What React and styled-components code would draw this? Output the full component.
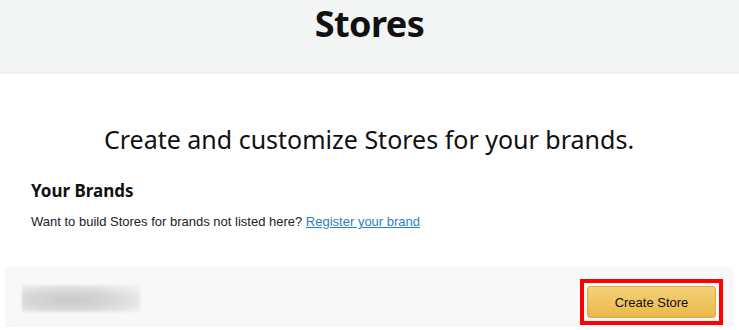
import React from 'react';
import styled, { createGlobalStyle } from 'styled-components';

const GlobalStyle = createGlobalStyle`
  body {
    margin: 0;
    background: #ffffff;
    font-family: "Noto Sans", Arial, sans-serif;
    color: #111111;
  }
`;

function App() {
  return (
    <>
      <GlobalStyle />
      <Header>
        <Title>Stores</Title>
      </Header>
      <Main>
        <Lead>Create and customize Stores for your brands.</Lead>
        <Section>
          <SectionTitle>Your Brands</SectionTitle>
          <Hint>
            Want to build Stores for brands not listed here?{' '}
            <Link href="#">Register your brand</Link>
          </Hint>
        </Section>
        <BrandCard>
          <BlurredName />
          <Highlight>
            <CreateButton>Create Store</CreateButton>
          </Highlight>
        </BrandCard>
      </Main>
    </>
  );
}

export default App;

const Header = styled.header`
  height: 72px;
  background-color: #f3f4f4;
  border-bottom: 1px solid #ebebeb;
  box-shadow: 0 1px 2px rgba(0, 0, 0, 0.04);
  display: flex;
  justify-content: center;
  align-items: flex-start;
`;

const Title = styled.h1`
  margin: 0;
  padding-top: 1px;
  font-size: 36px;
  line-height: 46px;
  font-weight: 700;
  letter-spacing: -0.6px;
`;

const Main = styled.main`
  padding: 46px 6px 0 5px;
`;

const Lead = styled.h2`
  margin: 0;
  text-align: center;
  font-size: 25px;
  line-height: 40px;
  font-weight: 400;
`;

const Section = styled.section`
  padding: 20px 26px 0;
`;

const SectionTitle = styled.h3`
  margin: 0;
  font-size: 17px;
  line-height: 24px;
  font-weight: 700;
`;

const Hint = styled.p`
  margin: 10px 0 0;
  font-family: "Liberation Sans", Arial, sans-serif;
  font-size: 13px;
  line-height: 18px;
  color: #222222;
`;

const Link = styled.a`
  color: #2a7fc9;
  text-decoration: underline;
`;

const BrandCard = styled.div`
  margin-top: 35px;
  height: 61px;
  background-color: #f8f8f8;
  border-radius: 6px;
  box-shadow: 0 1px 1px rgba(0, 0, 0, 0.12);
  display: flex;
  align-items: center;
  justify-content: space-between;
  padding: 0 10px 0 17px;
`;

const BlurredName = styled.div`
  width: 118px;
  height: 27px;
  margin-top: 4px;
  background: radial-gradient(ellipse at 40% 55%, #c9c9c9 0%, #d8d8d8 45%, #ececec 80%, #f4f4f4 100%);
  filter: blur(1px);
`;

const Highlight = styled.div`
  border: 4px solid #ff0000;
  padding: 3px;
  margin-top: 11px;
`;

const CreateButton = styled.button`
  display: block;
  width: 129px;
  height: 32px;
  border: 1px solid #d6ac4a;
  border-radius: 3px;
  background: linear-gradient(#f4d078, #eab94a);
  font-family: "Liberation Sans", Arial, sans-serif;
  font-size: 13px;
  color: #111111;
  cursor: pointer;
`;
